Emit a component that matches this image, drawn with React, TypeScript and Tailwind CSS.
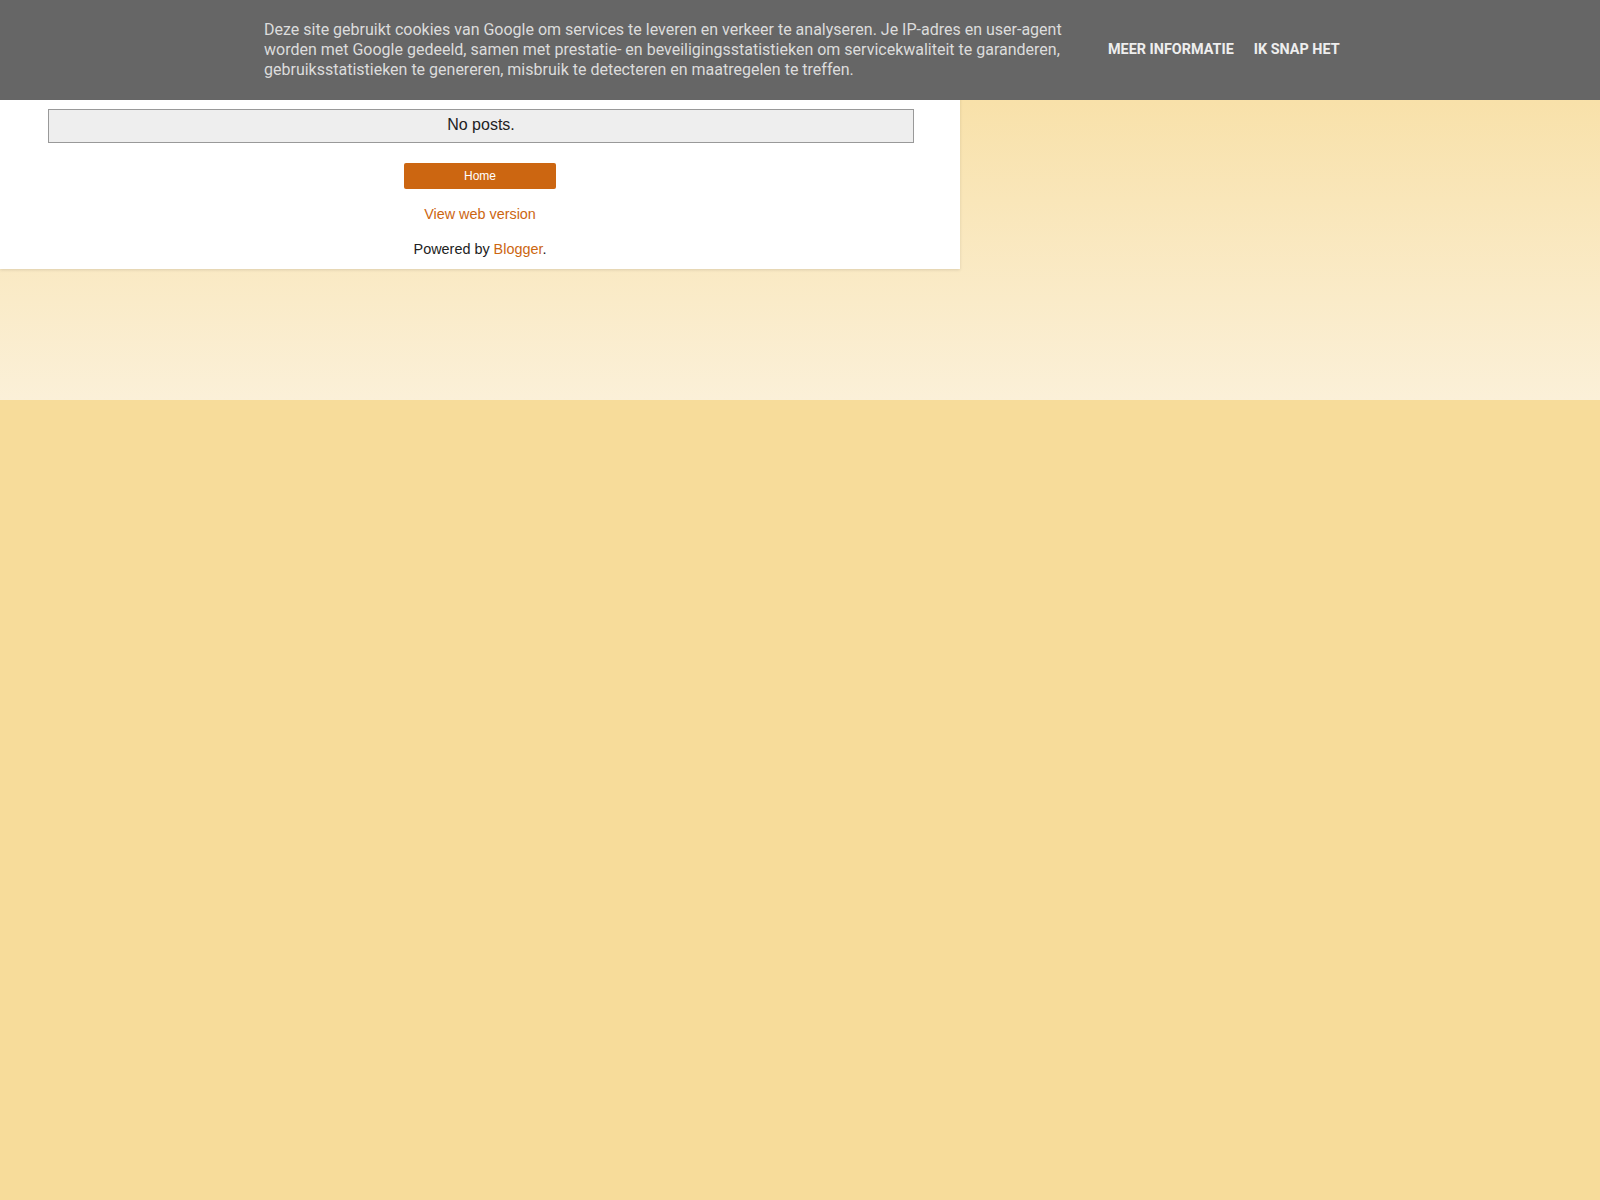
import React from "react";

function CookieBar() {
  return (
    <div className="fixed top-0 left-0 right-0 z-10 bg-[#666666]">
      <div className="mx-auto flex w-[1084px] items-center py-5 pl-[6px]">
        <p className="w-[812px] shrink-0 font-['Roboto',sans-serif] text-[16px] leading-5 text-[#dcdcdc]">
          Deze site gebruikt cookies van Google om services te leveren en verkeer te analyseren. Je IP-adres en user-agent
          worden met Google gedeeld, samen met prestatie- en beveiligingsstatistieken om servicekwaliteit te garanderen,
          gebruiksstatistieken te genereren, misbruik te detecteren en maatregelen te treffen.
        </p>
        <div className="ml-8 flex gap-5 whitespace-nowrap font-['Roboto',sans-serif] text-[14.4px] font-bold uppercase text-[#eeeeee]">
          <a href="#">Meer informatie</a>
          <a href="#">Ik snap het</a>
        </div>
      </div>
    </div>
  );
}

export default function App() {
  return (
    <div className="min-h-screen bg-[#f7dc9a] bg-[linear-gradient(to_bottom,#f7dc9a_0px,#fbf0d8_400px)] bg-[length:100%_400px] bg-no-repeat font-['Liberation_Sans',Arial,sans-serif]">
      <CookieBar />
      <div className="w-[960px] bg-white pt-[109px] pb-3 text-[#222] shadow-[0_1px_3px_rgba(0,0,0,0.12)]">
        <div className="ml-[48px] mr-[46px] h-[34px] border border-[#999] bg-[#eeeeee] text-center text-[16px] leading-[29px]">
          No posts.
        </div>
        <div className="mt-5 flex justify-center">
          <a
            href="#"
            className="flex h-[26px] w-[152px] items-center justify-center rounded-[2px] bg-[#cc6611] text-[12px] text-white"
          >
            Home
          </a>
        </div>
        <div className="mt-[17px] text-center text-[14.4px] leading-4">
          <a href="#" className="text-[#cc6611]">
            View web version
          </a>
        </div>
        <div className="mt-[19px] text-center text-[14.4px] leading-4">
          Powered by{" "}
          <a href="#" className="text-[#cc6611]">
            Blogger
          </a>
          .
        </div>
      </div>
    </div>
  );
}
